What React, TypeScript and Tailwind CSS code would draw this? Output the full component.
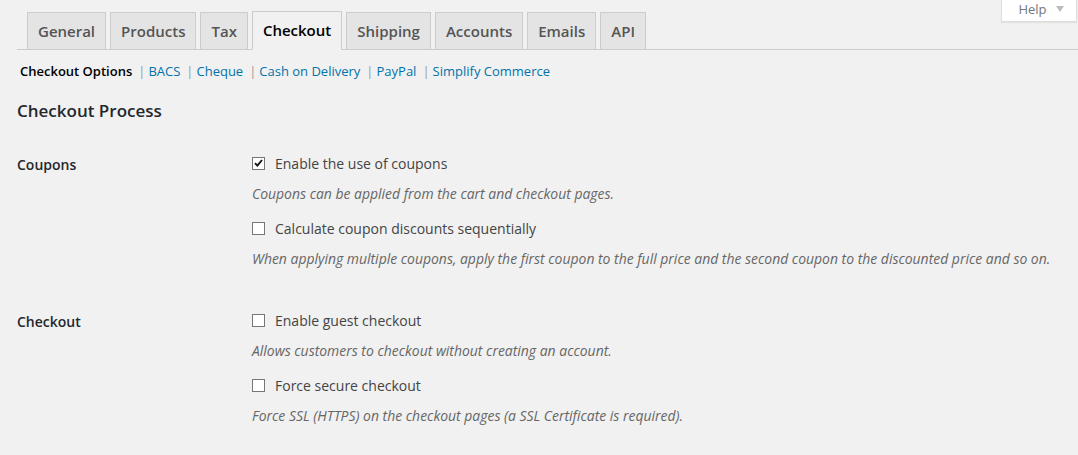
import React from "react";

const tabs = ["General", "Products", "Tax", "Checkout", "Shipping", "Accounts", "Emails", "API"];
const sections = ["BACS", "Cheque", "Cash on Delivery", "PayPal", "Simplify Commerce"];

function Checkbox({ checked }: { checked?: boolean }) {
  return (
    <span className="flex h-[13px] w-[13px] items-center justify-center border border-[#767676] bg-white">
      {checked && (
        <svg width="9" height="8" viewBox="0 0 9 8">
          <path d="M1 4.2 L3.4 6.6 L8 1" fill="none" stroke="#111" strokeWidth="1.9" />
        </svg>
      )}
    </span>
  );
}

function Option({ label, desc, checked, first }: { label: string; desc: string; checked?: boolean; first?: boolean }) {
  return (
    <div className={first ? "" : "mt-[14px]"}>
      <div className="flex h-[20px] items-center text-[14px] text-[#444]">
        <Checkbox checked={checked} />
        <span className="ml-[10px]">{label}</span>
      </div>
      <p className="mt-[11px] h-[20px] text-[13.95px] italic leading-[20px] text-[#666]">{desc}</p>
    </div>
  );
}

export default function App() {
  return (
    <div
      className="relative min-h-[455px] bg-[#f1f1f1] pt-[12px]"
      style={{ fontFamily: '"Open Sans", "Liberation Sans", sans-serif' }}
    >
      {/* help tab */}
      <div className="absolute right-[1px] top-0 flex h-[22px] w-[76px] items-start justify-center gap-[9px] border border-t-0 border-[#ddd] bg-white pl-[4px] shadow-[0_1px_1px_rgba(0,0,0,0.06)]">
        <span className="text-[13px] leading-[18px] text-[#72777c]">Help</span>
        <svg width="8" height="6" viewBox="0 0 8 6" className="mt-[6px]">
          <path d="M0 0 H8 L4 6 Z" fill="#bbb" />
        </svg>
      </div>

      <nav className="ml-[17px] flex h-[38px] items-end gap-[4px] border-b border-[#ccc] pl-[10px]">
        {tabs.map((t) =>
          t === "Checkout" ? (
            <span
              key={t}
              className="mb-[-1px] border border-b-[#f1f1f1] border-[#ccc] bg-[#f1f1f1] px-[10px] pb-[7px] pt-[6px] text-[15px] font-semibold leading-[24px] text-black"
            >
              {t}
            </span>
          ) : (
            <span
              key={t}
              className="border border-b-0 border-[#ccc] bg-[#e4e4e4] px-[10px] py-[6px] text-[15px] font-semibold leading-[24px] text-[#555]"
            >
              {t}
            </span>
          )
        )}
      </nav>

      <div className="ml-[20px] mt-[12px] flex h-[20px] items-center text-[13px]">
        <span className="font-semibold text-black">Checkout Options</span>
        {sections.map((s) => (
          <React.Fragment key={s}>
            <span className="ml-[6px] mr-[3px] text-[#999]">|</span>
            <a className="text-[#0073aa]">{s}</a>
          </React.Fragment>
        ))}
      </div>

      <h2 className="ml-[17px] mt-[17px] h-[24px] text-[17px] font-semibold leading-[24px] text-[#23282d]">
        Checkout Process
      </h2>

      <div className="ml-[17px] mt-[30px] grid grid-cols-[235px_1fr]">
        <div className="mt-[2px] h-[20px] text-[14px] font-semibold leading-[20px] text-[#23282d]">Coupons</div>
        <div>
          <Option first checked label="Enable the use of coupons" desc="Coupons can be applied from the cart and checkout pages." />
          <Option
            label="Calculate coupon discounts sequentially"
            desc="When applying multiple coupons, apply the first coupon to the full price and the second coupon to the discounted price and so on."
          />
        </div>

        <div className="mt-[43px] h-[20px] text-[14px] font-semibold leading-[20px] text-[#23282d]">Checkout</div>
        <div className="mt-[41px]">
          <Option first label="Enable guest checkout" desc="Allows customers to checkout without creating an account." />
          <Option label="Force secure checkout" desc="Force SSL (HTTPS) on the checkout pages (a SSL Certificate is required)." />
        </div>
      </div>
    </div>
  );
}
